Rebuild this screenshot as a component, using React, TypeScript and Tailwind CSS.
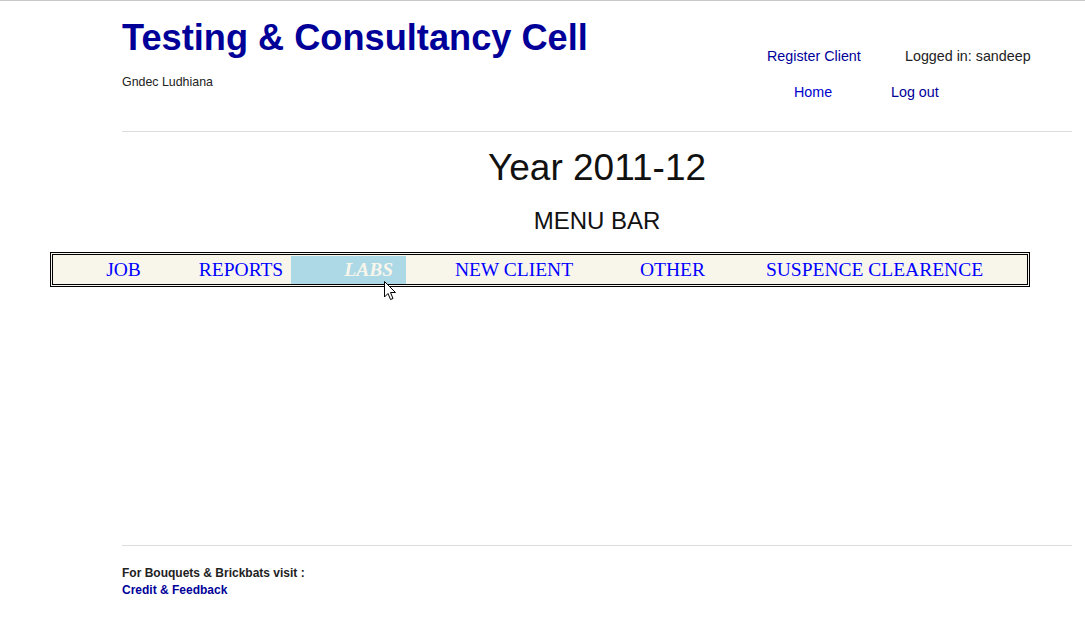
import React from "react";

const serif = { fontFamily: '"Liberation Serif", "Times New Roman", serif' };

function Cursor() {
  // mouse pointer hovering over the LABS cell
  return (
    <svg
      className="absolute left-[331px] top-[26px]"
      width="13"
      height="20"
      viewBox="0 0 13 20"
    >
      <path
        d="M0.5 0.5 L0.5 16 L4 12.5 L6.5 18.5 L9 17.5 L6.5 11.5 L11.5 11.5 Z"
        fill="#fff"
        stroke="#000"
        strokeWidth="1"
        strokeLinejoin="miter"
      />
    </svg>
  );
}

export default function App() {
  return (
    <div
      className="min-h-screen bg-white border-t border-[#c8c8c8] text-[#222]"
      style={{ fontFamily: '"Liberation Sans", Arial, sans-serif' }}
    >
      {/* header */}
      <div className="ml-[122px] w-[950px] h-[130px] flex">
        <div className="w-[645px] pt-[17px]">
          <h1 className="text-[36.2px] leading-[40px] font-bold text-[#000099]">
            Testing &amp; Consultancy Cell
          </h1>
          <div className="mt-[17px] text-[12.4px] leading-[14px]">Gndec Ludhiana</div>
        </div>
        <div className="pt-[47px] text-[14.3px] leading-[16px]">
          <div className="flex">
            <a className="w-[138px] text-[#000099] cursor-pointer">Register Client</a>
            <span>Logged in: sandeep</span>
          </div>
          <div className="flex mt-[20px] pl-[27px]">
            <a className="w-[97px] text-[#0000cc] cursor-pointer">Home</a>
            <a className="text-[#000099] cursor-pointer">Log out</a>
          </div>
        </div>
      </div>
      <div className="ml-[122px] w-[950px] h-px bg-[#dddddd]" />

      <div className="ml-[122px] w-[950px] text-center text-[#111]">
        <div className="mt-[16px] text-[37px] leading-[40px]">Year 2011-12</div>
        <div className="mt-[19px] text-[24px] leading-[28px]">MENU BAR</div>
      </div>

      {/* menu bar */}
      <div className="relative mt-[17px] ml-[50px] w-[980px] border-[3px] border-double border-black bg-[#f8f6eb] pt-[1px] pl-[1px]">
        <div className="flex h-[28px] text-[19.5px] leading-[27px] text-[#0000ff]" style={serif}>
          <a className="w-[139px] text-center cursor-pointer">JOB</a>
          <a className="w-[96px] text-center cursor-pointer">REPORTS</a>
          <a className="ml-[2px] w-[115px] bg-[#add8e6] text-right pr-[13px] italic font-bold text-[#f8f6eb] cursor-pointer">
            LABS
          </a>
          <a className="w-[216px] text-center cursor-pointer">NEW CLIENT</a>
          <a className="w-[101px] text-center cursor-pointer">OTHER</a>
          <a className="w-[303px] text-center cursor-pointer">SUSPENCE CLEARENCE</a>
        </div>
        <Cursor />
      </div>

      {/* footer */}
      <div className="mt-[258px] ml-[122px] w-[950px] h-px bg-[#dddddd]" />
      <div className="ml-[122px] mt-[19px] text-[12px] leading-[17px] font-bold">
        <div>For Bouquets &amp; Brickbats visit :</div>
        <a className="text-[#000099] cursor-pointer">Credit &amp; Feedback</a>
      </div>
    </div>
  );
}
